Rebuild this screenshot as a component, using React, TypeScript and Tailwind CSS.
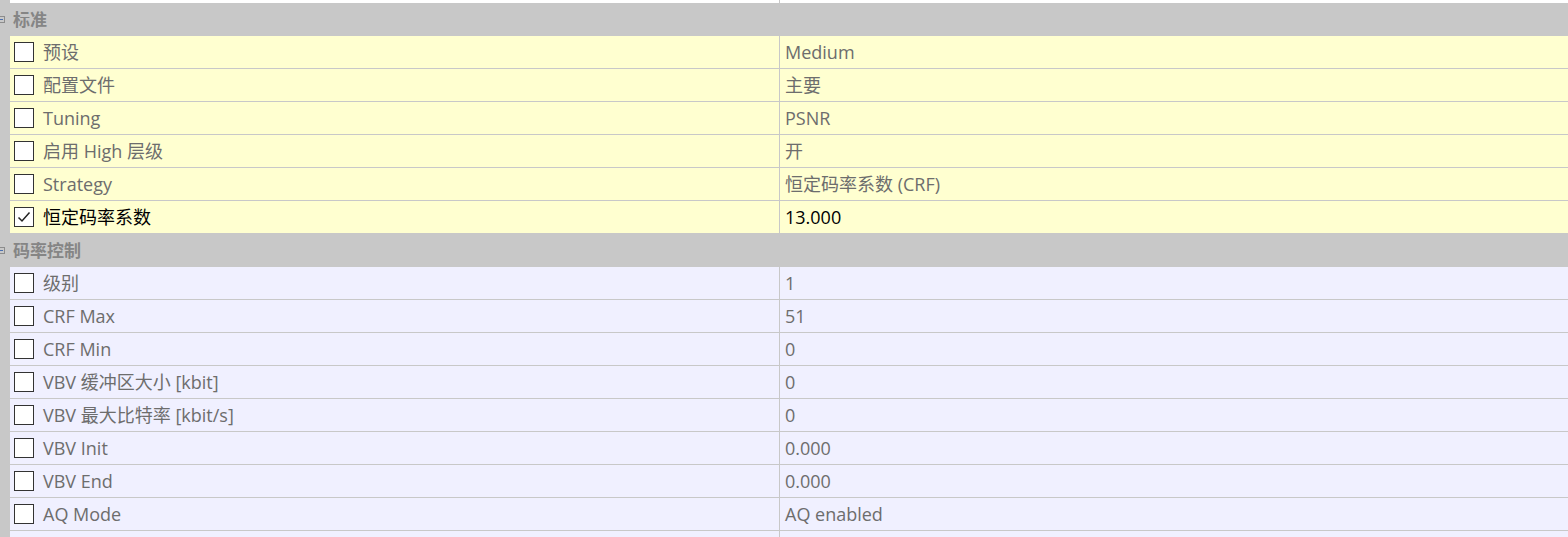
import React from 'react';

type Row = { name: string; value: string; checked?: boolean };

const groups: { title: string; bg: string; rows: Row[] }[] = [
  {
    title: '标准',
    bg: 'bg-[#ffffd0]',
    rows: [
      { name: '预设', value: 'Medium' },
      { name: '配置文件', value: '主要' },
      { name: 'Tuning', value: 'PSNR' },
      { name: '启用 High 层级', value: '开' },
      { name: 'Strategy', value: '恒定码率系数 (CRF)' },
      { name: '恒定码率系数', value: '13.000', checked: true },
    ],
  },
  {
    title: '码率控制',
    bg: 'bg-[#f0f0ff]',
    rows: [
      { name: '级别', value: '1' },
      { name: 'CRF Max', value: '51' },
      { name: 'CRF Min', value: '0' },
      { name: 'VBV 缓冲区大小 [kbit]', value: '0' },
      { name: 'VBV 最大比特率 [kbit/s]', value: '0' },
      { name: 'VBV Init', value: '0.000' },
      { name: 'VBV End', value: '0.000' },
      { name: 'AQ Mode', value: 'AQ enabled' },
      { name: '', value: '' },
    ],
  },
];

const CheckBox = ({ checked }: { checked?: boolean }) => (
  <div className="ml-[4px] w-[20px] h-[20px] shrink-0 border border-[#333] bg-white flex items-center justify-center">
    {checked && (
      <svg width="16" height="16" viewBox="0 0 16 16">
        <polyline points="2.5,8.5 6,12 13.5,3.5" fill="none" stroke="#222" strokeWidth="1.5" />
      </svg>
    )}
  </div>
);

const GroupHeader = ({ title }: { title: string }) => (
  <div className="h-[33px] bg-[#c8c8c8] flex items-center relative">
    <div className="absolute left-[-4px] top-[13px] w-[9px] h-[7px] border border-[#8c8c8c] flex items-center justify-center">
      <div className="w-[5px] h-px bg-[#4a6fb0]" />
    </div>
    <span className="ml-[13px] text-[17px] font-bold text-[#858585]">{title}</span>
  </div>
);

const PropRow = ({ row, bg }: { row: Row; bg: string }) => (
  <div className="flex h-[33px]">
    <div className="w-[10px] shrink-0 bg-[#c8c8c8]" />
    <div className={`flex flex-1 border-b border-[#c8c8c8] ${bg}`}>
      <div className="w-[770px] shrink-0 flex items-center border-r border-[#c8c8c8]">
        {row.name && <CheckBox checked={row.checked} />}
        <span className={`ml-[9px] text-[18px] ${row.checked ? 'text-black' : 'text-[#6d6d6d]'}`}>{row.name}</span>
      </div>
      <div className={`flex-1 flex items-center pl-[5px] text-[18px] ${row.checked ? 'text-black' : 'text-[#6d6d6d]'}`}>
        {row.value}
      </div>
    </div>
  </div>
);

export default function App() {
  return (
    <div
      className="w-[1568px] h-[537px] overflow-hidden bg-white"
      style={{ fontFamily: '"Open Sans", "Noto Sans CJK SC", sans-serif' }}
    >
      <div className="flex h-[3px]">
        <div className="w-[10px] bg-[#c8c8c8]" />
        <div className="w-[770px] border-r border-[#c8c8c8]" />
        <div className="flex-1" />
      </div>
      {groups.map((g) => (
        <div key={g.title}>
          <GroupHeader title={g.title} />
          {g.rows.map((r, i) => (
            <PropRow key={i} row={r} bg={g.bg} />
          ))}
        </div>
      ))}
    </div>
  );
}
